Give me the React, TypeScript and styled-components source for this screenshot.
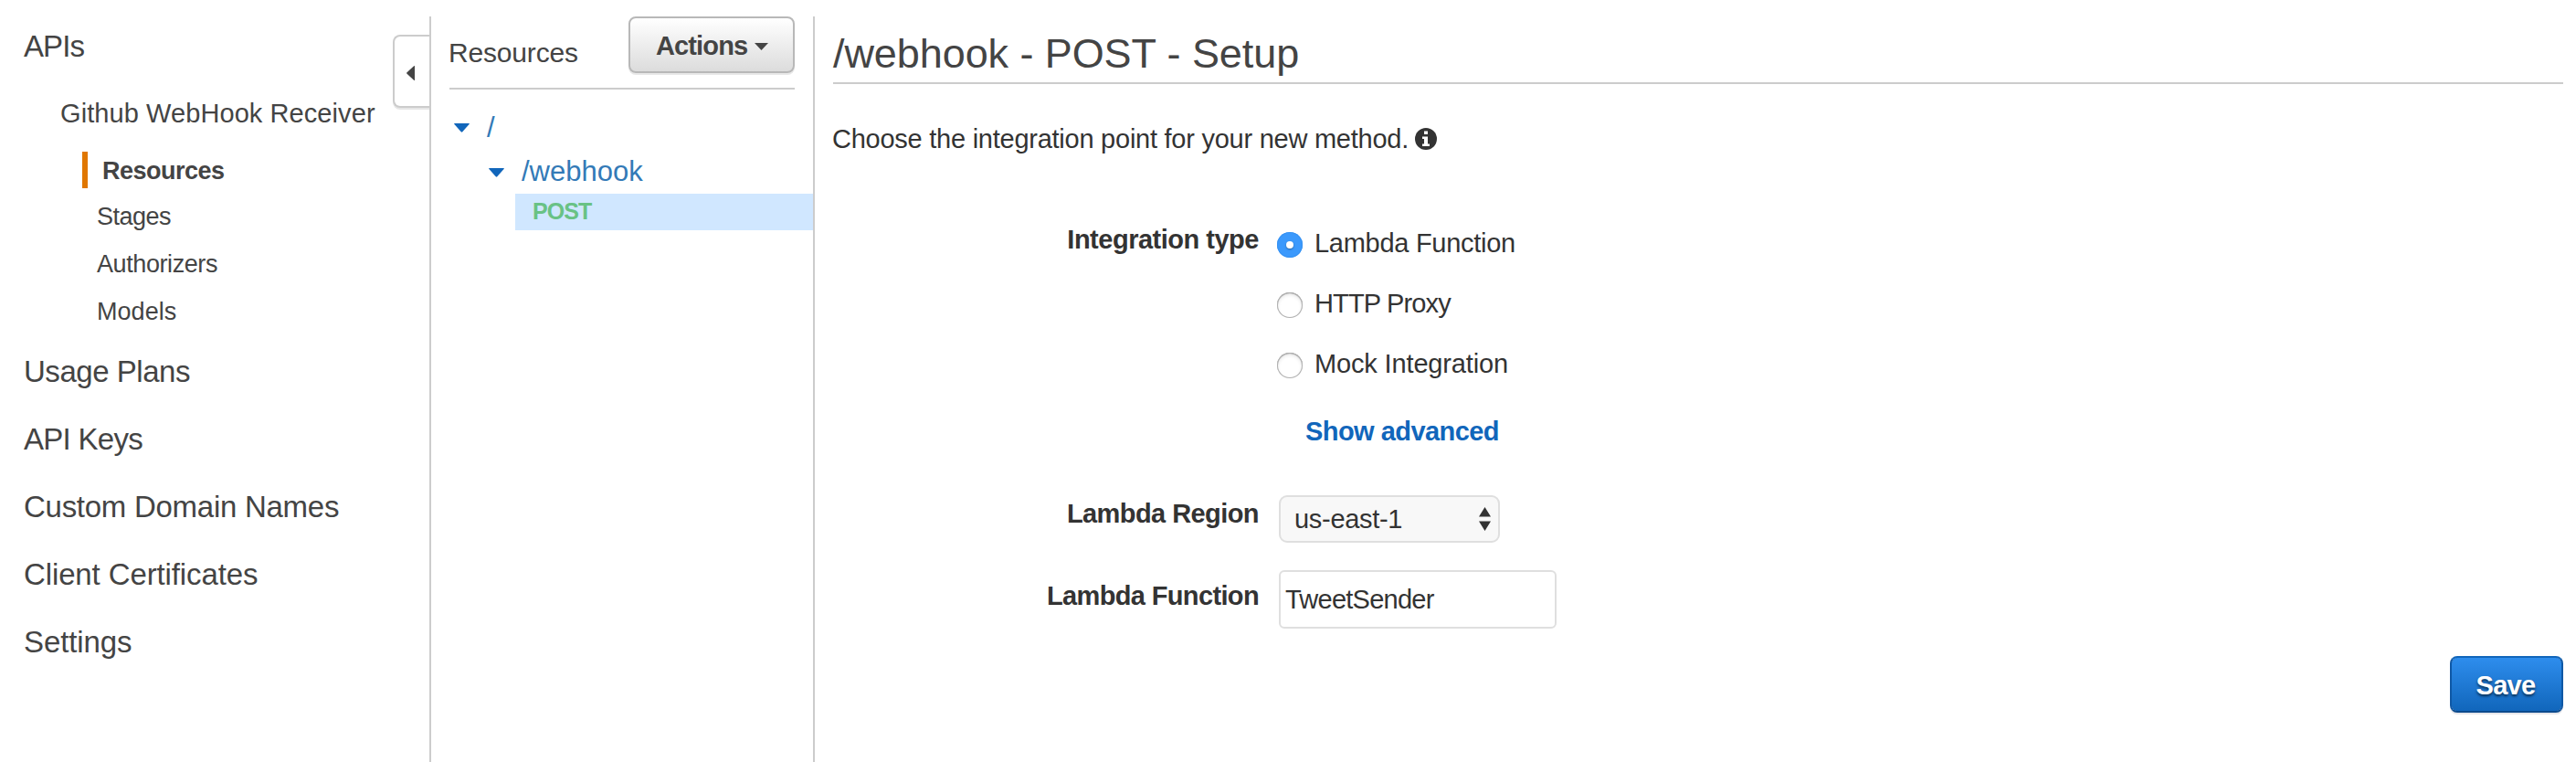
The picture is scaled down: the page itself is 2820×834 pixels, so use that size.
import React from 'react';
import styled, { createGlobalStyle } from 'styled-components';

const GlobalStyle = createGlobalStyle`
  * { box-sizing: border-box; }
  body {
    margin: 0;
    background: #fff;
    color: #333;
    font-family: "Liberation Sans", Arial, sans-serif;
    font-size: 29px;
    overflow: hidden;
  }
`;

const Page = styled.div`
  display: flex;
  height: 834px;
  padding-top: 18px;
`;

const Sidebar = styled.nav`
  position: relative;
  width: 472px;
  border-right: 2px solid #ccc;
  color: #444;
  white-space: nowrap;
`;

const NavItem = styled.div<{ $ls: number }>`
  padding-left: 26px;
  margin-bottom: 1px;
  font-size: 33px;
  line-height: 73px;
  letter-spacing: ${(p) => p.$ls}px;
`;

const NavHead = styled(NavItem)`
  margin-bottom: 0;
  line-height: 65px;
`;

const ApiName = styled.div`
  margin-top: 11px;
  padding-left: 66px;
  font-size: 29px;
  line-height: 60px;
  letter-spacing: 0.08px;
`;

const ActiveSub = styled.div`
  margin: 12px 0 5px 90px;
  padding: 2px 0 0 16px;
  border-left: 6px solid #e07700;
  font-size: 27px;
  font-weight: 700;
  line-height: 38px;
  letter-spacing: -0.51px;
`;

const SubItem = styled.div<{ $ls: number }>`
  padding-left: 106px;
  font-size: 27px;
  line-height: 52px;
  letter-spacing: ${(p) => p.$ls}px;
`;

const NavRest = styled.div`
  margin-top: 3px;
`;

const CollapseTab = styled.button`
  position: absolute;
  top: 20px;
  right: 0;
  display: flex;
  align-items: center;
  width: 40px;
  height: 80px;
  padding: 4px 0 0 13px;
  border: 2px solid #ccc;
  border-right: 0;
  border-radius: 8px 0 0 8px;
  background: #fff;
  box-shadow: 0 2px 0 #e6e6e6;
`;

const ResourcePanel = styled.section`
  width: 420px;
  border-right: 2px solid #ccc;
`;

const PanelHeader = styled.header`
  display: flex;
  justify-content: space-between;
  align-items: flex-start;
  height: 80px;
  margin: 0 20px;
  border-bottom: 2px solid #ccc;
  color: #444;
`;

const PanelTitle = styled.div`
  margin-top: 23px;
  margin-left: -1px;
  font-size: 30px;
  line-height: 33px;
  letter-spacing: -0.17px;
`;

const ActionsButton = styled.button`
  display: flex;
  align-items: center;
  gap: 8px;
  width: 182px;
  height: 62px;
  padding: 0 0 0 28px;
  border: 2px solid #b8b8b8;
  border-radius: 8px;
  background: linear-gradient(#fff, #dcdcdc);
  box-shadow: 0 2px 0 #e8e8e8;
  color: #444;
  font: 700 29px/60px "Liberation Sans", Arial, sans-serif;
  letter-spacing: -0.87px;
`;

const ButtonText = styled.span`
  height: 58px;
`;

const CaretSlot = styled.span`
  display: flex;
  padding-top: 4px;
`;

const Tree = styled.div`
  margin-top: 18px;
`;

const TreeRow = styled.div<{ $depth: number; $height: number }>`
  display: flex;
  gap: 19px;
  padding-left: ${(p) => 25 + p.$depth * 38}px;
  color: #337ab7;
  font-size: 31px;
  line-height: ${(p) => p.$height}px;

  svg {
    margin-top: ${(p) => p.$height - 28}px;
  }
`;

const MethodRow = styled.div`
  height: 40px;
  margin-left: 92px;
  padding-left: 19px;
  background: #d0e7ff;
  color: #69c285;
  font-size: 25px;
  font-weight: 700;
  line-height: 38px;
  letter-spacing: -0.93px;
`;

const Main = styled.main`
  flex: 1;
  padding: 0 14px 0 20px;
`;

const Title = styled.h1`
  margin: 0;
  padding: 12px 0 3px;
  border-bottom: 2px solid #ccc;
  color: #444;
  font-size: 45px;
  font-weight: 400;
  line-height: 57px;
  letter-spacing: -0.08px;
`;

const Intro = styled.p`
  display: flex;
  gap: 7px;
  margin: 44px 0 0 -1px;
  line-height: 32px;
  letter-spacing: -0.25px;

  svg {
    margin-top: 4px;
  }
`;

const Form = styled.div`
  display: grid;
  grid-template-columns: 466px 1fr;
  column-gap: 22px;
  margin-top: 78px;
`;

const Label = styled.label<{ $top?: number; $ls: number }>`
  margin-top: ${(p) => p.$top ?? 0}px;
  font-weight: 700;
  line-height: 32px;
  text-align: right;
  letter-spacing: ${(p) => p.$ls}px;
`;

const Options = styled.div`
  margin: 4px 0 54px -2px;
`;

const Option = styled.label<{ $ls: number }>`
  display: flex;
  gap: 13px;
  height: 66px;
  line-height: 32px;
  letter-spacing: ${(p) => p.$ls}px;
`;

const Radio = styled.span<{ $on?: boolean }>`
  display: flex;
  align-items: center;
  justify-content: center;
  width: 28px;
  height: 28px;
  margin-top: 4px;
  border-radius: 50%;
  background: ${(p) => (p.$on ? '#3b99fc' : '#fff')};
  box-shadow: ${(p) =>
    p.$on
      ? 'inset 0 0 0 1px #3792f2'
      : 'inset 0 0 0 1px #b0b0b0, inset 0 1px 1px #999, inset 0 2px 4px #ddd'};
`;

const RadioDot = styled.span`
  width: 8px;
  height: 8px;
  border-radius: 50%;
  background: #fff;
  box-shadow: 0 1px 2px rgba(0, 0, 0, 0.35);
`;

const AdvancedLink = styled.a`
  display: block;
  margin: 8px 0 0 31px;
  color: #1166bb;
  font-weight: 700;
  line-height: 32px;
  letter-spacing: -0.55px;
`;

const Select = styled.div`
  display: flex;
  justify-content: space-between;
  width: 242px;
  height: 52px;
  margin-bottom: 30px;
  padding: 0 8px 0 15px;
  border: 2px solid #dfdfdf;
  border-radius: 9px;
  background: #f8f8f8;
  line-height: 48px;
  letter-spacing: -0.3px;

  svg {
    margin-top: 11px;
  }
`;

const TextField = styled.div`
  width: 304px;
  height: 64px;
  padding-left: 5px;
  border: 2px solid #dfdfdf;
  border-radius: 6px;
  background: #fff;
  line-height: 60px;
  letter-spacing: -0.75px;
`;

const Footer = styled.footer`
  display: flex;
  justify-content: flex-end;
  margin-top: 30px;
`;

const SaveButton = styled.button`
  width: 124px;
  height: 62px;
  padding: 0 2px 0 0;
  border: 2px solid #0f58a5;
  border-top-color: #1166bb;
  border-bottom-color: #0c4a8c;
  border-radius: 8px;
  background: linear-gradient(#2e8ded, #1166bb) padding-box;
  background-color: #0f58a5;
  box-shadow: 0 2px 0 #e6e6ea;
  color: #fff;
  font: 700 29px/60px "Liberation Sans", Arial, sans-serif;
  letter-spacing: -0.7px;
  text-shadow: 0 2px 3px rgba(0, 0, 0, 0.6);
`;

const SaveText = styled.span`
  display: block;
  height: 58px;
`;

const TreeCaret = () => (
  <svg width="17" height="10" viewBox="0 0 17 10" fill="#1166bb">
    <path d="M.8 0h15.4q1.2 0 .4 1L9.3 9.3q-.8.8-1.6 0L.4 1Q-.4 0 .8 0z" />
  </svg>
);

const InfoIcon = () => (
  <svg width="24" height="24" viewBox="0 0 24 24">
    <circle cx="12" cy="12" r="12" fill="#333" />
    <path d="M10 3.500h4V7h-4zM8 9.500h6v8h2V20H8v-2.500h2V12H8z" fill="#fff" />
  </svg>
);

export default function App() {
  return (
    <>
      <GlobalStyle />
      <Page>
        <Sidebar>
          <NavHead $ls={-0.9}>APIs</NavHead>
          <ApiName>Github WebHook Receiver</ApiName>
          <ActiveSub>Resources</ActiveSub>
          <SubItem $ls={-0.51}>Stages</SubItem>
          <SubItem $ls={-0.41}>Authorizers</SubItem>
          <SubItem $ls={0.05}>Models</SubItem>
          <NavRest>
            <NavItem $ls={-0.46}>Usage Plans</NavItem>
            <NavItem $ls={-0.7}>API Keys</NavItem>
            <NavItem $ls={-0.27}>Custom Domain Names</NavItem>
            <NavItem $ls={-0.12}>Client Certificates</NavItem>
            <NavItem $ls={-0.11}>Settings</NavItem>
          </NavRest>
          <CollapseTab aria-label="Collapse">
            <svg width="9" height="16" viewBox="0 0 9 16" fill="#444">
              <path d="M9 .6v14.8q0 .9-.9.4L.5 8.7q-.7-.7 0-1.4L8.100.2Q9-.3 9 .6z" />
            </svg>
          </CollapseTab>
        </Sidebar>

        <ResourcePanel>
          <PanelHeader>
            <PanelTitle>Resources</PanelTitle>
            <ActionsButton>
              <ButtonText>Actions</ButtonText>
              <CaretSlot>
                <svg width="15" height="8" viewBox="0 0 15 8" fill="#444">
                  <path d="M0 0h15L7.500 8z" />
                </svg>
              </CaretSlot>
            </ActionsButton>
          </PanelHeader>
          <Tree>
            <TreeRow $depth={0} $height={47}>
              <TreeCaret />/
            </TreeRow>
            <TreeRow $depth={1} $height={49}>
              <TreeCaret />
              /webhook
            </TreeRow>
            <MethodRow>POST</MethodRow>
          </Tree>
        </ResourcePanel>

        <Main>
          <Title>/webhook - POST - Setup</Title>
          <Intro>
            Choose the integration point for your new method.
            <InfoIcon />
          </Intro>
          <Form>
            <Label $ls={-0.49}>Integration type</Label>
            <Options>
              <Option $ls={-0.28}>
                <Radio $on>
                  <RadioDot />
                </Radio>
                Lambda Function
              </Option>
              <Option $ls={-0.85}>
                <Radio />
                HTTP Proxy
              </Option>
              <Option $ls={-0.15}>
                <Radio />
                Mock Integration
              </Option>
              <AdvancedLink>Show advanced</AdvancedLink>
            </Options>

            <Label $top={4} $ls={-0.57}>Lambda Region</Label>
            <Select>
              us-east-1
              <svg width="13" height="26" viewBox="0 0 13 26" fill="#333">
                <path d="M6.500 0L13 10.500H0zM0 15.500h13L6.500 26z" />
              </svg>
            </Select>

            <Label $top={12} $ls={-0.64}>Lambda Function</Label>
            <TextField>TweetSender</TextField>
          </Form>
          <Footer>
            <SaveButton>
              <SaveText>Save</SaveText>
            </SaveButton>
          </Footer>
        </Main>
      </Page>
    </>
  );
}
